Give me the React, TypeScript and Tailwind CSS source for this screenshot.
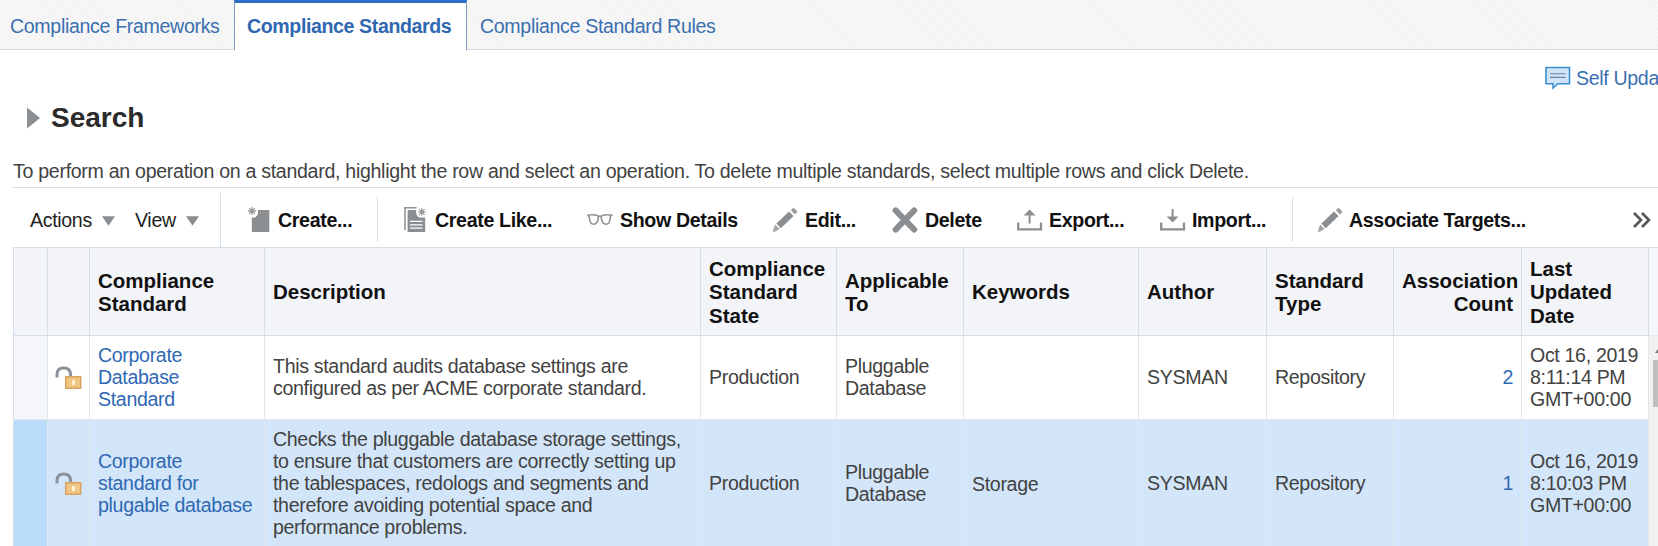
import React from "react";

const GRID =
  "grid grid-cols-[34px_42px_175px_436px_136px_127px_175px_128px_127px_128px_127px]";

function Pencil() {
  return (
    <svg width="26" height="26" viewBox="0 0 26 26" fill="#8b8f92">
      <path d="M4.400 16.400 17 4.600l4.600 4.400L8.800 21.200z" />
      <path d="M18.800 3.200 20.600 1.400q.9-.7 1.800.1l2.400 2.300q.8.900 0 1.800L23 7.400z" fill="#9a9ea1" />
      <path d="M3.200 17.600 7.600 22 2 25.200.800 24z" fill="#a4a8ab" />
    </svg>
  );
}

function CreateIcon() {
  return (
    <svg width="24" height="28" viewBox="0 0 24 28" fill="#8b8f92">
      <path d="M11 4h11.3v22H4.8V11.4h3.4q2.8-1.600 2.800-4.400z" />
      <g stroke="#9a9ea1" strokeWidth="1.300">
        <path d="M5 1v8M1 5h8M2.200 2.200l5.600 5.600M7.800 2.200L2.200 7.800" />
      </g>
    </svg>
  );
}

function CreateLikeIcon() {
  return (
    <svg width="24" height="28" viewBox="0 0 24 28">
      <path d="M1 24V1.800h11.500" fill="none" stroke="#8b8f92" strokeWidth="1.500" />
      <path d="M3.600 4h8.600v3.400q1 4.200 5 4.200h4V26H3.600z" fill="#8b8f92" />
      <path d="M6 15.400h12.500M6 18.800h12.500M6 22.200h12.500" stroke="#fff" strokeWidth="1.300" />
      <circle cx="17.800" cy="6" r="2.200" fill="#8b8f92" />
      <path
        d="M17.800 2v8M13.800 6h8M15 3.200l5.600 5.600M20.600 3.200l-5.600 5.600"
        stroke="#9a9ea1"
        strokeWidth="1.100"
      />
    </svg>
  );
}

function Glasses() {
  return (
    <svg width="26" height="14" viewBox="0 0 26 14" fill="none" stroke="#8f9396" strokeWidth="1.600">
      <path d="M1 2.200Q5 1.200 9.800 2.200q1.900.300 1.500 3-.700 6-4.800 6-3.500 0-4-5.500Q2.300 2.600 1 2.200z" />
      <path d="M24.600 2.200Q20.600 1.200 15.800 2.200q-1.900.300-1.500 3 .700 6 4.800 6 3.500 0 4-5.500 .200-3.100 1.500-3.500z" />
      <path d="M11 3.600q1.800-.900 3.600 0" />
    </svg>
  );
}

function Cross() {
  return (
    <svg width="26" height="26" viewBox="0 0 26 26">
      <path d="M3.600 3.400 22.200 22.600M22.200 3.400 3.600 22.600" stroke="#8b8f92" strokeWidth="6" strokeLinecap="round" />
    </svg>
  );
}

function Tray({ down }: { down?: boolean }) {
  return (
    <svg width="26" height="24" viewBox="0 0 26 24" fill="none" stroke="#8b8f92">
      <path d="M1.200 14.500v6.800h22.800v-6.800" strokeWidth="2.300" />
      {down ? (
        <>
          <path d="M12.600 1v9" strokeWidth="2" />
          <path d="M6.600 8.400h12l-6 6z" fill="#8b8f92" stroke="none" />
        </>
      ) : (
        <>
          <path d="M12.600 15.500V6" strokeWidth="2" />
          <path d="M6.600 7.400h12l-6-6z" fill="#8b8f92" stroke="none" />
        </>
      )}
    </svg>
  );
}

function Lock() {
  return (
    <svg width="28" height="24" viewBox="0 0 28 24">
      <path d="M2 11.500V8.600Q2 2 8.800 2q6.600 0 6.800 6.600V10" fill="none" stroke="#8a929b" strokeWidth="3" />
      <rect x="10.700" y="10.800" width="15" height="11.400" fill="#f0c684" stroke="#d99f58" strokeWidth="1.400" />
      <path d="M17 14h3v5h-3z" fill="#fff3d6" />
    </svg>
  );
}

function Comment() {
  return (
    <svg width="26" height="24" viewBox="0 0 26 24">
      <path d="M1 1.500h23.500v16.200H12.800L8 22v-4.300H1z" fill="#cfe4f8" stroke="#3e8fd0" strokeWidth="1.600" />
      <path d="M5 7.800h15.500M5 11.400h15.500" stroke="#6c8296" strokeWidth="1.100" />
    </svg>
  );
}

function Caret() {
  return (
    <svg width="13" height="10" viewBox="0 0 13 10" fill="#8b8f92">
      <path d="M0 .300h13L6.500 9.700z" />
    </svg>
  );
}

function Tool({ width, icon, iconWidth, label }: { width: string; icon: React.ReactNode; iconWidth: string; label: string }) {
  return (
    <button className={`flex shrink-0 items-center whitespace-nowrap font-bold text-[#111] ${width}`}>
      <span className={`flex shrink-0 items-center ${iconWidth}`}>{icon}</span>
      {label}
    </button>
  );
}

function Head({ children, right }: { children?: React.ReactNode; right?: boolean }) {
  return (
    <div
      className={`flex items-center border-r border-[#d3dfe7] px-2 pt-px text-[20.5px] leading-[23.4px] font-bold tracking-normal text-[#111] ${
        right ? "text-right" : ""
      }`}
    >
      <div className="w-full">{children}</div>
    </div>
  );
}

function Cell({ children, className = "" }: { children?: React.ReactNode; className?: string }) {
  return (
    <div className={`flex items-center border-r border-[#e2e7eb] px-2 ${className}`}>
      <div className="w-full whitespace-pre">{children}</div>
    </div>
  );
}

type Row = {
  name: string;
  description: string;
  keywords: string;
  count: number;
  updated: string;
  selected: boolean;
};

const rows: Row[] = [
  {
    name: "Corporate\nDatabase\nStandard",
    description: "This standard audits database settings are\nconfigured as per ACME corporate standard.",
    keywords: "",
    count: 2,
    updated: "Oct 16, 2019\n8:11:14 PM\nGMT+00:00",
    selected: false,
  },
  {
    name: "Corporate\nstandard for\nplugable database",
    description:
      "Checks the pluggable database storage settings,\nto ensure that customers are correctly setting up\nthe tablespaces, redologs and segments and\ntherefore avoiding potential space and\nperformance problems.",
    keywords: "Storage",
    count: 1,
    updated: "Oct 16, 2019\n8:10:03 PM\nGMT+00:00",
    selected: true,
  },
];

export default function App() {
  return (
    <div className="flex h-[546px] w-[1658px] flex-col overflow-hidden bg-white font-['Liberation_Sans',Arial,sans-serif] text-[19.6px] leading-[22px] tracking-[-0.34px] text-[#424242]">
      <nav className="flex h-[50px] shrink-0 bg-[repeating-linear-gradient(45deg,#f8f8f8_0px,#f8f8f8_1.500px,#f3f3f3_1.500px,#f3f3f3_3px)] text-[#3a6fb0]">
        <a className="flex w-[234px] items-center border-b border-[#d3dde6] pl-[10px] pt-[2px]">Compliance Frameworks</a>
        <a className="flex w-[233px] items-center border-x border-t-[3px] border-x-[#7d9cbd] border-t-[#2f6fc5] bg-white pb-[2px] pl-[12px] font-bold tracking-[-0.4px] text-[#2f68b0]">
          Compliance Standards
        </a>
        <a className="flex flex-1 items-center border-b border-[#d3dde6] pl-[13px] pt-[2px]">Compliance Standard Rules</a>
      </nav>

      <div className="flex h-[44px] shrink-0 items-end whitespace-nowrap pb-[5px] pl-[1545px] text-[#3a6fb0]">
        <span className="-mb-px w-[31px] shrink-0">
          <Comment />
        </span>
        <span>Self Update</span>
      </div>

      <h2 className="flex h-[46px] shrink-0 items-center pl-[27px] pt-px text-[28px] font-bold tracking-normal text-[#2b2b2b]">
        <svg width="24" height="22" viewBox="0 0 24 22" fill="#8b8f92">
          <path d="M0 .500 13 11 0 21.500z" />
        </svg>
        Search
      </h2>

      <p className="flex h-[47px] shrink-0 items-end whitespace-nowrap pb-[5px] pl-[13px] tracking-[-0.305px]">
        To perform an operation on a standard, highlight the row and select an operation. To delete multiple standards, select multiple rows and click Delete.
      </p>

      <div className="ml-[13px] flex h-[60px] shrink-0 items-center border-t border-[#d3dfe7] pl-[17px] pt-[4px] text-black">
        <button className="flex w-[105px] items-center text-[#222]">
          <span className="w-[72px] text-left">Actions</span>
          <span className="pt-[3px]">
            <Caret />
          </span>
        </button>
        <button className="flex w-[85px] items-center text-[#222]">
          <span className="w-[51px] text-left">View</span>
          <span className="pt-[3px]">
            <Caret />
          </span>
        </button>
        <span className="mr-[26px] h-[54px] w-px self-end bg-[#d3dfe7]" />
        <Tool width="w-[130px]" iconWidth="w-[31px]" icon={<CreateIcon />} label="Create..." />
        <span className="mr-[26px] h-[45px] w-px bg-[#d3dfe7]" />
        <Tool width="w-[183px]" iconWidth="w-[31px]" icon={<CreateLikeIcon />} label="Create Like..." />
        <Tool width="w-[185px]" iconWidth="w-[33px]" icon={<Glasses />} label="Show Details" />
        <Tool width="w-[120px]" iconWidth="w-[33px]" icon={<Pencil />} label="Edit..." />
        <Tool width="w-[125px]" iconWidth="w-[33px]" icon={<Cross />} label="Delete" />
        <Tool width="w-[143px]" iconWidth="w-[32px]" icon={<Tray />} label="Export..." />
        <Tool width="w-[132px]" iconWidth="w-[32px]" icon={<Tray down />} label="Import..." />
        <span className="mr-[24px] h-[45px] w-px bg-[#d3dfe7]" />
        <Tool width="w-[315px]" iconWidth="w-[32px]" icon={<Pencil />} label="Associate Targets..." />
        <svg width="20" height="18" viewBox="0 0 20 18" fill="none" stroke="#555" strokeWidth="2.600">
          <path d="M2 2l7 7-7 7M10 2l7 7-7 7" />
        </svg>
      </div>

      <div className="ml-[13px] flex flex-1 border-t border-l border-[#d3dfe7]">
        <div className="flex w-[1635px] shrink-0 flex-col">
          <div className={`${GRID} h-[88px] shrink-0 border-b border-[#d3dfe7] bg-[#f2f4f8]`}>
            <Head />
            <Head />
            <Head>Compliance Standard</Head>
            <Head>Description</Head>
            <Head>Compliance Standard State</Head>
            <Head>Applicable To</Head>
            <Head>Keywords</Head>
            <Head>Author</Head>
            <Head>Standard Type</Head>
            <Head right>Association Count</Head>
            <Head>
              Last
              <br />
              Updated
              <br />
              Date
            </Head>
          </div>
          {rows.map((row) => (
            <div
              key={row.name}
              className={`${GRID} shrink-0 ${row.selected ? "h-[127px] bg-[#d3e6f9]" : "h-[84px] border-b border-[#e2e7eb]"}`}
            >
              <Cell className={row.selected ? "bg-[#bbdcfb]" : "bg-[#f5f7fb]"} />
              <div className="flex items-center border-r border-[#e2e7eb] pl-[7px]">
                <Lock />
              </div>
              <Cell className="pb-px text-[#2f68b5]">{row.name}</Cell>
              <Cell className="pb-px">{row.description}</Cell>
              <Cell className="pb-px">Production</Cell>
              <Cell className="pb-px">{"Pluggable\nDatabase"}</Cell>
              <Cell className="pt-px">{row.keywords}</Cell>
              <Cell className="pb-px">SYSMAN</Cell>
              <Cell className="pb-px">Repository</Cell>
              <Cell className="pb-px text-right text-[#2f68b5]">{row.count}</Cell>
              <Cell className="pb-px">{row.updated}</Cell>
            </div>
          ))}
        </div>
        <div className="flex flex-1 flex-col">
          <div className="h-[88px] shrink-0 border-b border-[#e4e9ee] bg-[#f5f7fb]" />
          <div className="flex flex-1 flex-col bg-[#f1f1f1] pl-[4px]">
            <div className="flex h-[24px] items-center justify-end overflow-hidden pt-[6px]">
              <svg width="3" height="4" viewBox="0 0 3 4" fill="#777">
                <path d="M0 4 3 0v4z" />
              </svg>
            </div>
            <div className="h-[47px] bg-[#bfbfbf]" />
          </div>
        </div>
      </div>
    </div>
  );
}
